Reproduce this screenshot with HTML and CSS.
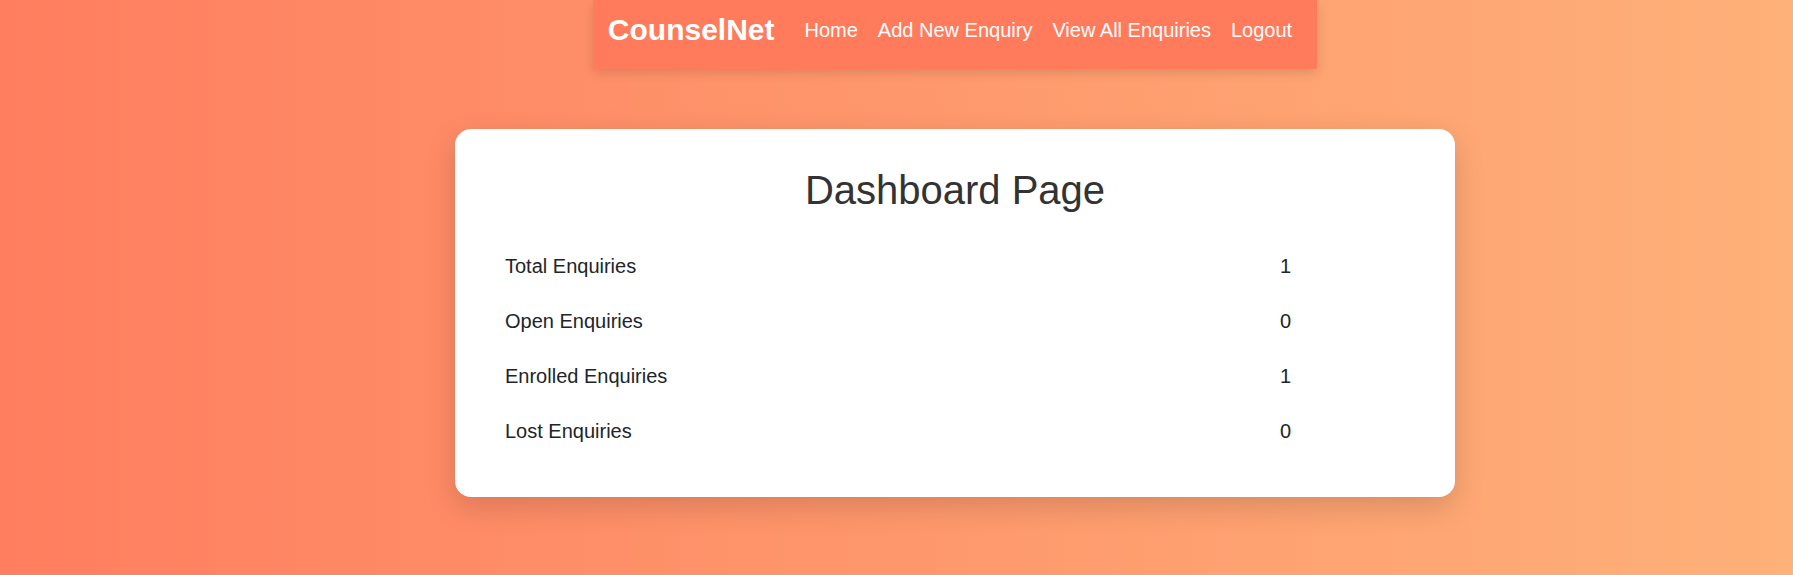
FILE: index.html
```html
<!DOCTYPE html>
<html lang="en">
<head>
<meta charset="utf-8">
<title>CounselNet - Dashboard</title>
<link rel="stylesheet" href="styles.css">
</head>
<body>
  <div class="page">
    <nav class="navbar">
      <a class="brand" href="#">CounselNet</a>
      <ul class="nav-links">
        <li><a href="#">Home</a></li>
        <li><a href="#">Add New Enquiry</a></li>
        <li><a href="#">View All Enquiries</a></li>
        <li><a href="#">Logout</a></li>
      </ul>
    </nav>
    <main class="card">
      <h1 class="title">Dashboard Page</h1>
      <div class="stats">
        <div class="stat-label">Total Enquiries</div><div class="stat-value">1</div>
        <div class="stat-label">Open Enquiries</div><div class="stat-value">0</div>
        <div class="stat-label">Enrolled Enquiries</div><div class="stat-value">1</div>
        <div class="stat-label">Lost Enquiries</div><div class="stat-value">0</div>
      </div>
    </main>
  </div>
</body>
</html>
```
FILE: styles.css
```css
html {
  overflow: hidden;
}
body {
  margin: 0;
  min-height: 100vh;
  background: linear-gradient(to right, #ff7e5f, #feb47b);
  background-size: 1910px 100%;
  background-repeat: no-repeat;
  background-color: #feb47b;
  font-family: "Liberation Sans", Arial, sans-serif;
}
.page {
  display: flex;
  flex-direction: column;
  align-items: center;
  padding-left: 117px;
}
.navbar {
  display: flex;
  align-items: center;
  padding: 13px 15px 22px;
  background: #ff7b5c;
  box-shadow: 0 4px 10px rgba(0, 0, 0, 0.12);
}
.brand {
  color: #fff;
  font-size: 30px;
  font-weight: bold;
  text-decoration: none;
  margin-right: 20px;
}
.nav-links {
  display: flex;
  list-style: none;
  margin: 0;
  padding: 0;
}
.nav-links a {
  display: block;
  padding: 0 10px;
  color: #fff;
  font-size: 20px;
  text-decoration: none;
}
.card {
  box-sizing: border-box;
  width: 1000px;
  margin-top: 60px;
  padding: 39px 50px 38px;
  background: #fff;
  border-radius: 16px;
  box-shadow: 0 10px 30px rgba(0, 0, 0, 0.15);
}
.title {
  margin: 0 0 26px;
  text-align: center;
  font-size: 40px;
  font-weight: normal;
  color: #333;
}
.stats {
  display: grid;
  grid-template-columns: 1fr 125px;
  grid-auto-rows: 55px;
  align-items: center;
  font-size: 20px;
  color: #212529;
}
```
